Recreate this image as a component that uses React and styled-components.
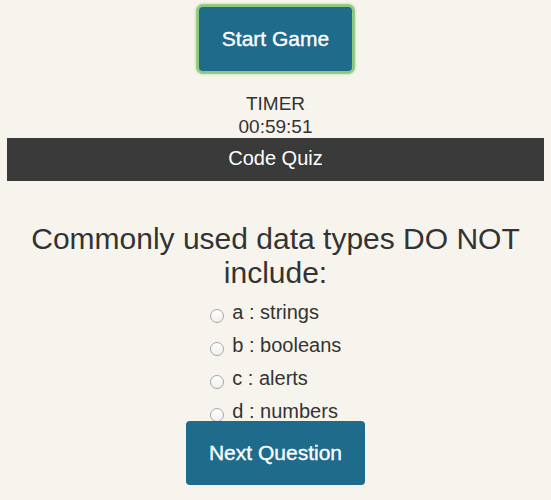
import React from "react";
import styled, { createGlobalStyle } from "styled-components";

const Global = createGlobalStyle`
  html, body {
    margin: 0;
    padding: 0;
    background: #f7f4ee;
  }
  body {
    font-family: "Liberation Sans", Arial, Helvetica, sans-serif;
    color: #333;
  }
`;

const Page = styled.div`
  padding: 0 7px;
  display: flex;
  flex-direction: column;
  align-items: center;
`;

const Button = styled.button`
  font-family: "Liberation Sans", Arial, Helvetica, sans-serif;
  font-size: 21px;
  line-height: normal;
  color: #fff;
  -webkit-text-stroke: 0.35px #fff;
  background: #1f6b8c;
  border: none;
  border-radius: 4px;
  padding: 20px 23px;
  margin-top: ${(p) => p.$mt || "0px"};
  cursor: pointer;
  box-shadow: ${(p) =>
    p.$focused
      ? "0 0 0 2px #8dc87c, 0 0 0 3px rgba(141, 200, 124, 0.85), 0 0 2px 4px rgba(141, 200, 124, 0.35)"
      : "none"};
  position: relative;
  z-index: 1;
`;

const Timer = styled.div`
  margin-top: 21px;
  font-size: 19px;
  line-height: 23px;
  text-align: center;
  color: #333;
`;

const TitleBar = styled.header`
  align-self: stretch;
  background: #3a3a3a;
  color: #fff;
  text-align: center;
  font-size: 20px;
  line-height: 23px;
  padding: 9px 0 11px;
`;

const Question = styled.h2`
  margin: 41px 0 0;
  font-weight: normal;
  font-size: 30px;
  line-height: 34px;
  text-align: center;
  color: #333;
`;

const Options = styled.div`
  margin-top: 11px;
  display: flex;
  flex-direction: column;
  gap: 10px;
`;

const Option = styled.label`
  display: block;
  font-size: 20px;
  line-height: 23px;
  color: #333;
  white-space: nowrap;
`;

const Radio = styled.input.attrs({ type: "radio" })`
  appearance: none;
  -webkit-appearance: none;
  width: 14px;
  height: 14px;
  margin: 0 3px 0 0;
  border: 1px solid #a6a6a6;
  border-radius: 50%;
  background: linear-gradient(#ffffff, #f0f0f0);
  vertical-align: -4px;
  box-sizing: border-box;
`;

const options = [
  { key: "a", text: "strings" },
  { key: "b", text: "booleans" },
  { key: "c", text: "alerts" },
  { key: "d", text: "numbers" },
];

export default function App() {
  return (
    <>
      <Global />
      <Page>
        <Button $focused $mt="7px">Start Game</Button>
        <Timer>
          TIMER
          <br />
          00:59:51
        </Timer>
        <TitleBar>Code Quiz</TitleBar>
        <Question>Commonly used data types DO NOT include:</Question>
        <Options>
          {options.map((o) => (
            <Option key={o.key}>
              <Radio name="answer" value={o.key} /> {o.key} : {o.text}
            </Option>
          ))}
        </Options>
        <Button $mt="-2px">Next Question</Button>
      </Page>
    </>
  );
}
